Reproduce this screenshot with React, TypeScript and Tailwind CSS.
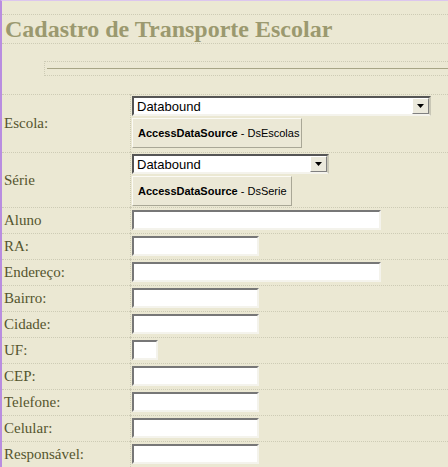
import React from 'react';

const fields = [
  { label: 'Aluno', w: 'w-[249px]' },
  { label: 'RA:', w: 'w-[127px]' },
  { label: 'Endereço:', w: 'w-[249px]' },
  { label: 'Bairro:', w: 'w-[127px]' },
  { label: 'Cidade:', w: 'w-[127px]' },
  { label: 'UF:', w: 'w-[26px]' },
  { label: 'CEP:', w: 'w-[127px]' },
  { label: 'Telefone:', w: 'w-[127px]' },
  { label: 'Celular:', w: 'w-[127px]' },
  { label: 'Responsável:', w: 'w-[127px]' },
];

const TextBox = ({ w }: { w: string }) => (
  <input
    readOnly
    className={`${w} h-[20px] block bg-white outline-none border-2 border-t-[#777] border-l-[#777] border-b-[#f4f3ec] border-r-[#f4f3ec]`}
  />
);

const DropDown = ({ w }: { w: string }) => (
  <div
    className={`${w} h-[20px] flex items-center bg-white border-2 border-t-[#555] border-l-[#555] border-b-[#f4f3ec] border-r-[#c9c7b6]`}
  >
    <span className="flex-1 pl-[3px] text-[13px] text-black font-['Liberation_Sans',sans-serif] leading-none">
      Databound
    </span>
    <div className="w-[17px] h-[16px] flex items-center justify-center bg-[#ebe9dc] border border-t-[#fff] border-l-[#fff] border-b-[#808080] border-r-[#808080]">
      <svg width="7" height="4" viewBox="0 0 7 4">
        <polygon points="0,0 7,0 3.5,4" fill="#000" />
      </svg>
    </div>
  </div>
);

const DataSource = ({ w, name }: { w: string; name: string }) => (
  <div
    className={`${w} h-[30px] mt-[2px] flex items-center pl-[5px] bg-[#ebe8d6] border border-t-[#fbfaf4] border-l-[#fbfaf4] border-b-[#a9a796] border-r-[#a9a796] font-['Liberation_Sans',sans-serif] text-[11px] text-black`}
  >
    <span className="font-bold">AccessDataSource</span>
    <span>&nbsp;- {name}</span>
  </div>
);

const App = () => {
  return (
    <div className="w-[448px] h-[467px] overflow-hidden bg-[#ebe8d3] border-l-2 border-l-[#b98de0] border-t border-t-[#dcc6ee] font-['Liberation_Serif',serif]">
      {/* Title */}
      <div className="mt-[13px] h-[30px] border-y border-dotted border-[#cdcbb5] flex items-center pl-[3px]">
        <h1 className="text-[24px] font-bold text-[#9b996f] leading-none">Cadastro de Transporte Escolar</h1>
      </div>

      {/* Line */}
      <div className="mt-[17px] ml-[42px] h-[15px] border border-r-0 border-dotted border-[#cdcbb5] flex items-center pl-[2px]">
        <div className="w-full h-px bg-[#a7a585]" />
      </div>

      {/* Form */}
      <div className="mt-[18px] grid grid-cols-[128px_1fr] text-[15px] text-[#55552e]">
        <div className="border-t border-dotted border-[#cdcbb5] flex items-center pl-[2px] h-[58px]">Escola:</div>
        <div className="border-t border-l border-dotted border-[#cdcbb5] pt-[1px] pl-[1px]">
          <DropDown w="w-[299px]" />
          <DataSource w="w-[170px]" name="DsEscolas" />
        </div>

        <div className="border-t border-dotted border-[#cdcbb5] flex items-center pl-[2px] h-[55px]">Série</div>
        <div className="border-t border-l border-dotted border-[#cdcbb5] pt-[1px] pl-[1px]">
          <DropDown w="w-[197px]" />
          <DataSource w="w-[160px]" name="DsSerie" />
        </div>

        {fields.map((f) => (
          <React.Fragment key={f.label}>
            <div className="border-t border-dotted border-[#cdcbb5] flex items-center pl-[2px] h-[26px]">{f.label}</div>
            <div className="border-t border-l border-dotted border-[#cdcbb5] pt-[2px] pl-[1px] h-[26px]">
              <TextBox w={f.w} />
            </div>
          </React.Fragment>
        ))}
      </div>
    </div>
  );
};

export default App;
